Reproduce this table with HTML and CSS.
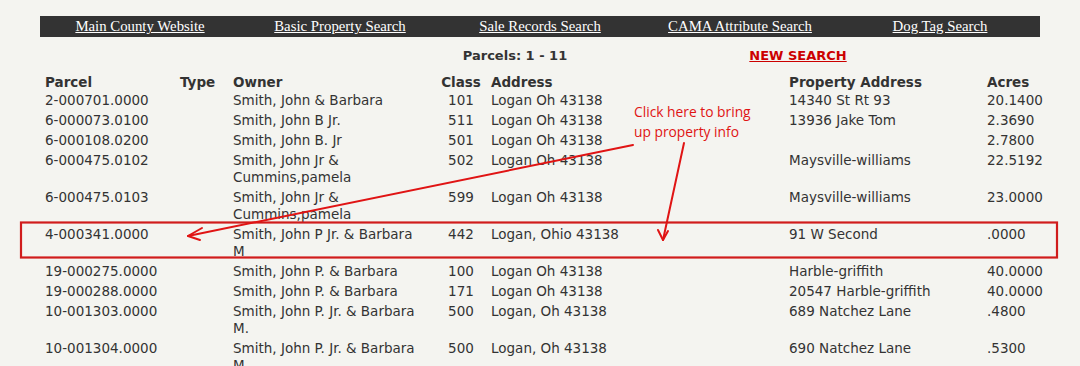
FILE: index.html
```html
<!DOCTYPE html>
<html>
<head>
<meta charset="utf-8">
<link rel="stylesheet" href="styles.css">
</head>
<body>
<div class="page">
  <nav class="nav">
    <a href="#">Main County Website</a>
    <a href="#">Basic Property Search</a>
    <a href="#">Sale Records Search</a>
    <a href="#">CAMA Attribute Search</a>
    <a href="#">Dog Tag Search</a>
  </nav>
  <div class="summary">
    <span class="count">Parcels: 1 - 11</span>
    <a href="#" class="new">NEW SEARCH</a>
  </div>
  <table class="results">
    <colgroup>
      <col class="c-parcel"><col class="c-type"><col class="c-owner"><col class="c-class"><col class="c-addr"><col class="c-paddr"><col class="c-acres">
    </colgroup>
    <thead>
      <tr><th>Parcel</th><th>Type</th><th>Owner</th><th class="ctr">Class</th><th>Address</th><th>Property Address</th><th>Acres</th></tr>
    </thead>
    <tbody>
      <tr><td>2-000701.0000</td><td></td><td class="own">Smith, John &amp; Barbara</td><td class="ctr">101</td><td>Logan Oh 43138</td><td>14340 St Rt 93</td><td>20.1400</td></tr>
      <tr><td>6-000073.0100</td><td></td><td class="own">Smith, John B Jr.</td><td class="ctr">511</td><td>Logan Oh 43138</td><td>13936 Jake Tom</td><td>2.3690</td></tr>
      <tr><td>6-000108.0200</td><td></td><td class="own">Smith, John B. Jr</td><td class="ctr">501</td><td>Logan Oh 43138</td><td></td><td>2.7800</td></tr>
      <tr><td>6-000475.0102</td><td></td><td class="own">Smith, John Jr &amp; Cummins,pamela</td><td class="ctr">502</td><td>Logan Oh 43138</td><td>Maysville-williams</td><td>22.5192</td></tr>
      <tr><td>6-000475.0103</td><td></td><td class="own">Smith, John Jr &amp; Cummins,pamela</td><td class="ctr">599</td><td>Logan Oh 43138</td><td>Maysville-williams</td><td>23.0000</td></tr>
      <tr><td>4-000341.0000</td><td></td><td class="own">Smith, John P Jr. &amp; Barbara M</td><td class="ctr">442</td><td>Logan, Ohio 43138</td><td>91 W Second</td><td>.0000</td></tr>
      <tr><td>19-000275.0000</td><td></td><td class="own">Smith, John P. &amp; Barbara</td><td class="ctr">100</td><td>Logan Oh 43138</td><td>Harble-griffith</td><td>40.0000</td></tr>
      <tr><td>19-000288.0000</td><td></td><td class="own">Smith, John P. &amp; Barbara</td><td class="ctr">171</td><td>Logan Oh 43138</td><td>20547 Harble-griffith</td><td>40.0000</td></tr>
      <tr><td>10-001303.0000</td><td></td><td class="own">Smith, John P. Jr. &amp; Barbara M.</td><td class="ctr">500</td><td>Logan, Oh 43138</td><td>689 Natchez Lane</td><td>.4800</td></tr>
      <tr><td>10-001304.0000</td><td></td><td class="own">Smith, John P. Jr. &amp; Barbara M</td><td class="ctr">500</td><td>Logan, Oh 43138</td><td>690 Natchez Lane</td><td>.5300</td></tr>
    </tbody>
  </table>
</div>

<div class="note">Click here to bring<br>up property info</div>
<svg class="annot" width="1080" height="366" viewBox="0 0 1080 366">
  <rect x="21" y="222.5" width="1036" height="35" fill="none" stroke="#d01c1c" stroke-width="2.2"/>
  <g stroke="#e01414" stroke-width="2" fill="none" stroke-linecap="round" stroke-linejoin="round">
    <line x1="633" y1="145" x2="188" y2="236"/>
    <polyline points="202,228 188,236 200,240"/>
    <line x1="684" y1="143" x2="663" y2="240"/>
    <polyline points="658,230 663,240 668,231"/>
  </g>
</svg>
</body>
</html>
```

FILE: styles.css
```css
html, body {
  margin: 0;
  padding: 0;
  background: #f4f4f0;
}

.page {
  padding: 16px 40px 0;
  color: #333;
  font-family: "DejaVu Sans", Verdana, sans-serif;
}

.nav {
  display: grid;
  grid-template-columns: repeat(5, 1fr);
  background: #333333;
  height: 21px;
  align-items: center;
}

.nav a {
  text-align: center;
  color: #ffffff;
  font-family: "Liberation Serif", Georgia, serif;
  font-size: 14.8px;
  line-height: 21px;
  text-decoration: underline;
}

.summary {
  display: grid;
  grid-template-columns: 300px 350px 216px 1fr;
  height: 37px;
  align-items: center;
  font-size: 13px;
  font-weight: bold;
}

.summary .count {
  grid-column: 2;
  text-align: center;
  color: #333;
}

.summary .new {
  grid-column: 3;
  text-align: center;
  color: #cc0000;
  text-decoration: underline;
}

.results {
  width: 1000px;
  border-collapse: collapse;
  table-layout: fixed;
  font-size: 13.5px;
}

.c-parcel { width: 135px; }
.c-type { width: 53px; }
.c-owner { width: 208px; }
.c-class { width: 50px; }
.c-addr { width: 298px; }
.c-paddr { width: 198px; }
.c-acres { width: 58px; }

.results th {
  text-align: left;
  font-weight: bold;
  padding: 0 5px 0;
  line-height: 17px;
}

.results td {
  padding: 1px 5px 2px;
  line-height: 17px;
  vertical-align: top;
}

.results td.own {
  padding-right: 16px;
}

.results .ctr {
  text-align: center;
}

.note {
  position: absolute;
  left: 634px;
  top: 102px;
  color: #e01414;
  font-family: "Open Sans", "Noto Sans", sans-serif;
  font-size: 13.8px;
  line-height: 20px;
}

.annot {
  position: absolute;
  left: 0;
  top: 0;
  pointer-events: none;
}
```
